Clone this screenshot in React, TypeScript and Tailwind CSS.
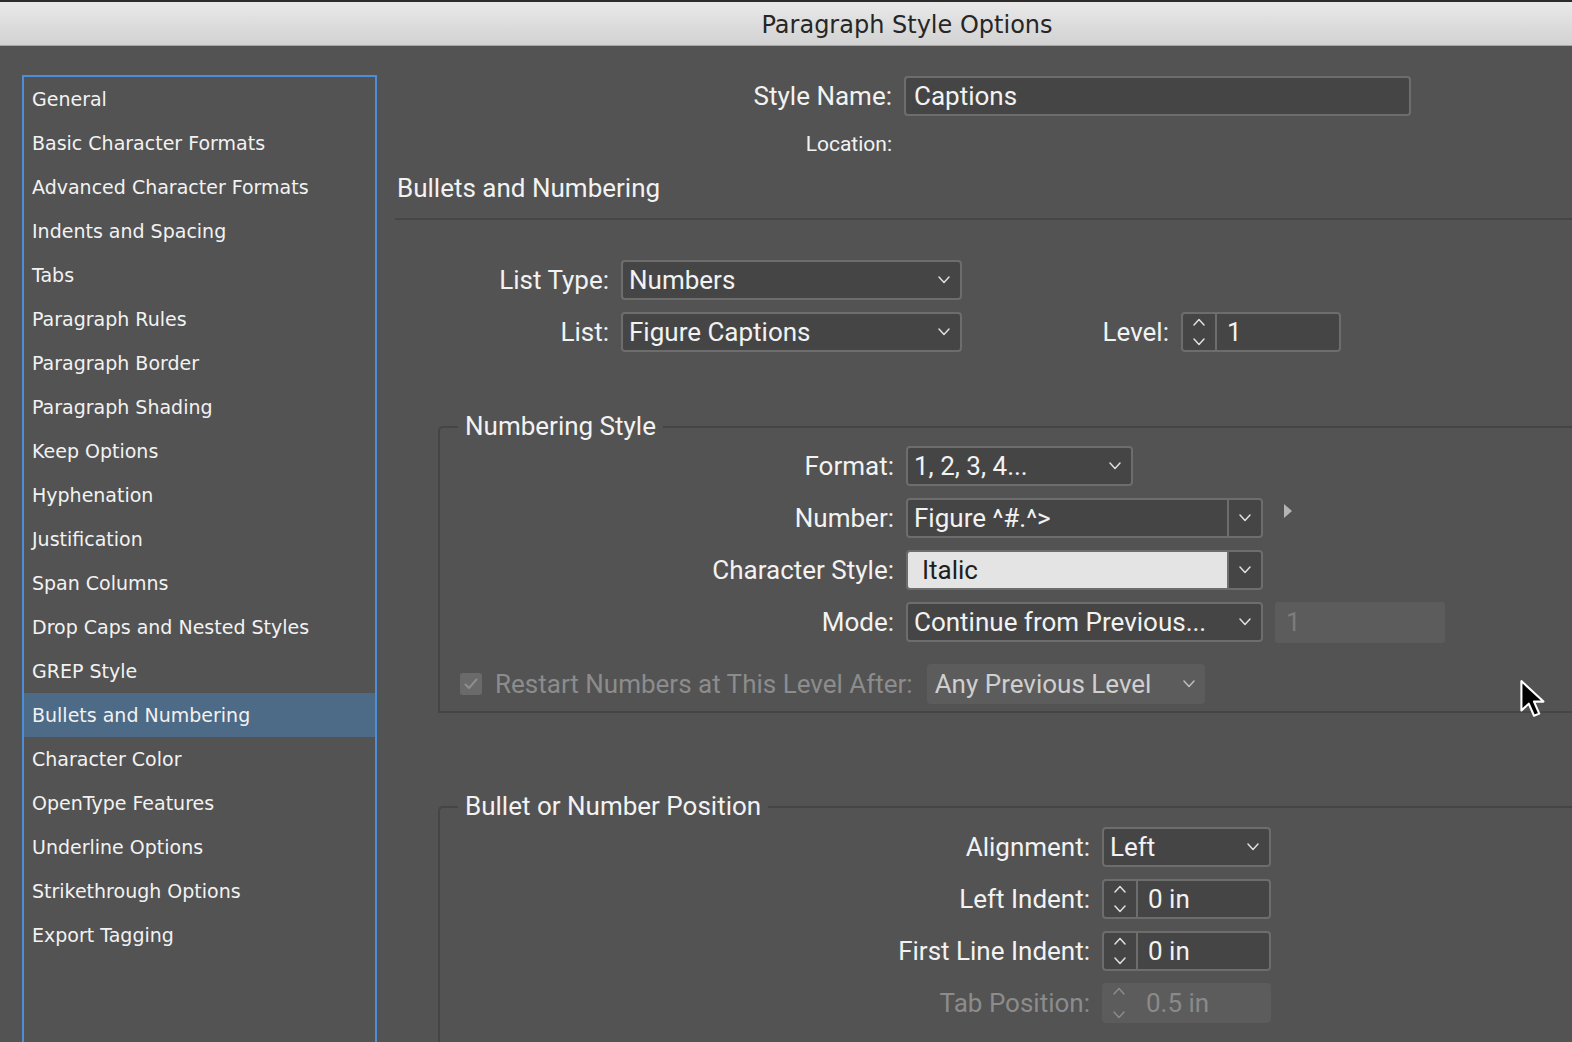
import React from 'react';

const ITEMS = [
  'General',
  'Basic Character Formats',
  'Advanced Character Formats',
  'Indents and Spacing',
  'Tabs',
  'Paragraph Rules',
  'Paragraph Border',
  'Paragraph Shading',
  'Keep Options',
  'Hyphenation',
  'Justification',
  'Span Columns',
  'Drop Caps and Nested Styles',
  'GREP Style',
  'Bullets and Numbering',
  'Character Color',
  'OpenType Features',
  'Underline Options',
  'Strikethrough Options',
  'Export Tagging',
];

function cn(...inputs: any[]) {
  return inputs.filter(Boolean).join(' ');
}

function Chevron({ up, color = '#dedede' }: { up?: boolean; color?: string }) {
  return (
    <svg width="12" height="8" viewBox="0 0 12 8" fill="none">
      <polyline
        points={up ? '1,7 6,1.5 11,7' : '1,1 6,6.5 11,1'}
        stroke={color}
        strokeWidth="1.5"
        strokeLinecap="round"
        strokeLinejoin="round"
      />
    </svg>
  );
}

function Select({ value, className, disabled }: { value: string; className: string; disabled?: boolean }) {
  return (
    <div
      className={cn(
        'h-[40px] rounded-[4px] flex items-center justify-between pl-[6px] pr-[10px]',
        disabled ? 'bg-[#5c5c5c] text-[#cfcfcf]' : 'bg-[#454545] border-2 border-[#6d6d6d]',
        className
      )}
    >
      <span>{value}</span>
      <Chevron color={disabled ? '#bdbdbd' : '#dedede'} />
    </div>
  );
}

function Combo({ value, light }: { value: string; light?: boolean }) {
  return (
    <div className="h-[40px] w-[357px] rounded-[4px] border-2 border-[#6d6d6d] bg-[#454545] flex overflow-hidden">
      <div
        className={cn(
          'flex-1 flex items-center pl-[6px]',
          light ? 'bg-[#e4e4e4] text-[#1e1e1e] pl-[14px]' : ''
        )}
      >
        {value}
      </div>
      <div className="w-[34px] border-l-2 border-[#6d6d6d] flex items-center justify-center">
        <Chevron />
      </div>
    </div>
  );
}

function Spinner({ value, className, disabled }: { value: string; className: string; disabled?: boolean }) {
  return (
    <div
      className={cn(
        'h-[40px] rounded-[4px] flex',
        disabled ? 'bg-[#5c5c5c] text-[#8a8a8a]' : 'bg-[#454545] border-2 border-[#6d6d6d]',
        className
      )}
    >
      <div
        className={cn(
          'w-[34px] flex flex-col items-center justify-between py-[4px]',
          disabled ? '' : 'border-r-2 border-[#6d6d6d]'
        )}
      >
        <Chevron up color={disabled ? '#8a8a8a' : '#dedede'} />
        <Chevron color={disabled ? '#8a8a8a' : '#dedede'} />
      </div>
      <div className="flex items-center pl-[10px]">{value}</div>
    </div>
  );
}

function Row({
  label,
  labelClass,
  children,
  className,
  muted,
}: {
  label: string;
  labelClass: string;
  children: React.ReactNode;
  className?: string;
  muted?: boolean;
}) {
  return (
    <div className={cn('flex items-center h-[40px]', className)}>
      <div className={cn('shrink-0 text-right', muted ? 'text-[#8c8c8c]' : '', labelClass)}>{label}</div>
      <div className="ml-[12px] flex items-center">{children}</div>
    </div>
  );
}

function GroupHeader({ title, className }: { title: string; className?: string }) {
  return (
    <div className={cn('flex h-[30px]', className)}>
      <div className="self-end w-[20px] h-[15px] border-t-2 border-l-2 border-[#454545] rounded-tl-[5px]" />
      <span className="px-[7px] leading-[30px]">{title}</span>
      <div className="self-end flex-1 h-[15px] border-t-2 border-[#454545]" />
    </div>
  );
}

function Cursor() {
  return (
    <svg className="absolute left-[1519px] top-[679px]" width="30" height="42" viewBox="0 0 28 40">
      <path
        d="M2 2 L2 30 L9 23.5 L14 35 L19 33 L14 21.5 L23 21.5 Z"
        fill="#000"
        stroke="#fff"
        strokeWidth="2"
        strokeLinejoin="round"
      />
    </svg>
  );
}

export default function App() {
  return (
    <div className="relative w-[1572px] h-[1042px] overflow-hidden bg-[#535353] text-[#f2f2f2] text-[26px] font-['Roboto',sans-serif]">
      <div className="h-[46px] border-t-2 border-[#2c2c2c] border-b border-b-[#a6a6a6] bg-gradient-to-b from-[#e9e9e9] to-[#d2d2d2] flex items-center justify-center pl-[242px] pt-[3px]">
        <span className="text-[24px] text-[#262626] font-['DejaVu_Sans',sans-serif]">Paragraph Style Options</span>
      </div>

      <div className="flex">
        <div className="shrink-0 ml-[22px] mt-[29px] w-[355px] h-[1000px] border-2 border-[#4b8fdb] font-['DejaVu_Sans',sans-serif] text-[19px]">
          {ITEMS.map((item) => (
            <div
              key={item}
              className={cn(
                'h-[44px] flex items-center pl-[8px]',
                item === 'Bullets and Numbering' ? 'bg-[#4d6a87]' : ''
              )}
            >
              {item}
            </div>
          ))}
        </div>

        <div className="flex-1 min-w-0 pt-[30px]">
          <Row label="Style Name:" labelClass="w-[515px]">
            <div className="h-[40px] w-[507px] rounded-[4px] border-2 border-[#6d6d6d] bg-[#454545] flex items-center pl-[8px]">
              Captions
            </div>
          </Row>
          <div className="mt-[17px] h-[24px] flex items-center">
            <div className="w-[515px] text-right text-[21px]">Location:</div>
          </div>
          <div className="mt-[16px] h-[30px] pl-[20px] leading-[30px]">Bullets and Numbering</div>
          <div className="mt-[15px] ml-[18px] border-t-2 border-[#464646]" />

          <Row label="List Type:" labelClass="w-[232px]" className="mt-[40px]">
            <Select value="Numbers" className="w-[341px]" />
          </Row>
          <div className="mt-[12px] flex items-center">
            <Row label="List:" labelClass="w-[232px]">
              <Select value="Figure Captions" className="w-[341px]" />
            </Row>
            <Row label="Level:" labelClass="w-[207px]">
              <Spinner value="1" className="w-[160px]" />
            </Row>
          </div>

          <div className="mt-[59px] ml-[61px]">
            <GroupHeader title="Numbering Style" />
            <div className="border-l-2 border-b-2 border-[#454545] pt-[5px] pb-[7px]">
              <Row label="Format:" labelClass="w-[454px]">
                <Select value="1, 2, 3, 4..." className="w-[227px]" />
              </Row>
              <Row label="Number:" labelClass="w-[454px]" className="mt-[12px]">
                <Combo value="Figure ^#.^>" />
                <svg className="ml-[20px] -mt-[14px]" width="10" height="16" viewBox="0 0 10 16">
                  <path d="M1 1 L9 8 L1 15 Z" fill="#b4b4b4" />
                </svg>
              </Row>
              <Row label="Character Style:" labelClass="w-[454px]" className="mt-[12px]">
                <Combo value="Italic" light />
              </Row>
              <Row label="Mode:" labelClass="w-[454px]" className="mt-[12px]">
                <Select value="Continue from Previous..." className="w-[357px]" />
                <div className="ml-[12px] h-[41px] w-[170px] rounded-[3px] bg-[#5c5c5c] text-[#7c7c7c] flex items-center pl-[11px]">
                  1
                </div>
              </Row>
              <div className="mt-[22px] h-[40px] flex items-center pl-[20px]">
                <div className="w-[22px] h-[22px] rounded-[3px] bg-[#6a6a6a] flex items-center justify-center">
                  <svg width="14" height="12" viewBox="0 0 14 12" fill="none">
                    <polyline points="1.5,6.5 5,10 12.5,1.5" stroke="#8e8e8e" strokeWidth="2" strokeLinecap="round" strokeLinejoin="round" />
                  </svg>
                </div>
                <span className="ml-[13px] text-[#8c8c8c]">Restart Numbers at This Level After:</span>
                <Select value="Any Previous Level" className="ml-[14px] w-[278px] pl-[8px]" disabled />
              </div>
            </div>
          </div>

          <div className="mt-[78px] ml-[61px]">
            <GroupHeader title="Bullet or Number Position" />
            <div className="border-l-2 border-[#454545] pt-[6px] h-[300px]">
              <Row label="Alignment:" labelClass="w-[650px]">
                <Select value="Left" className="w-[169px]" />
              </Row>
              <Row label="Left Indent:" labelClass="w-[650px]" className="mt-[12px]">
                <Spinner value="0 in" className="w-[169px]" />
              </Row>
              <Row label="First Line Indent:" labelClass="w-[650px]" className="mt-[12px]">
                <Spinner value="0 in" className="w-[169px]" />
              </Row>
              <Row label="Tab Position:" labelClass="w-[650px]" className="mt-[12px]" muted>
                <Spinner value="0.5 in" className="w-[169px]" disabled />
              </Row>
            </div>
          </div>
        </div>
      </div>

      <Cursor />
    </div>
  );
}
